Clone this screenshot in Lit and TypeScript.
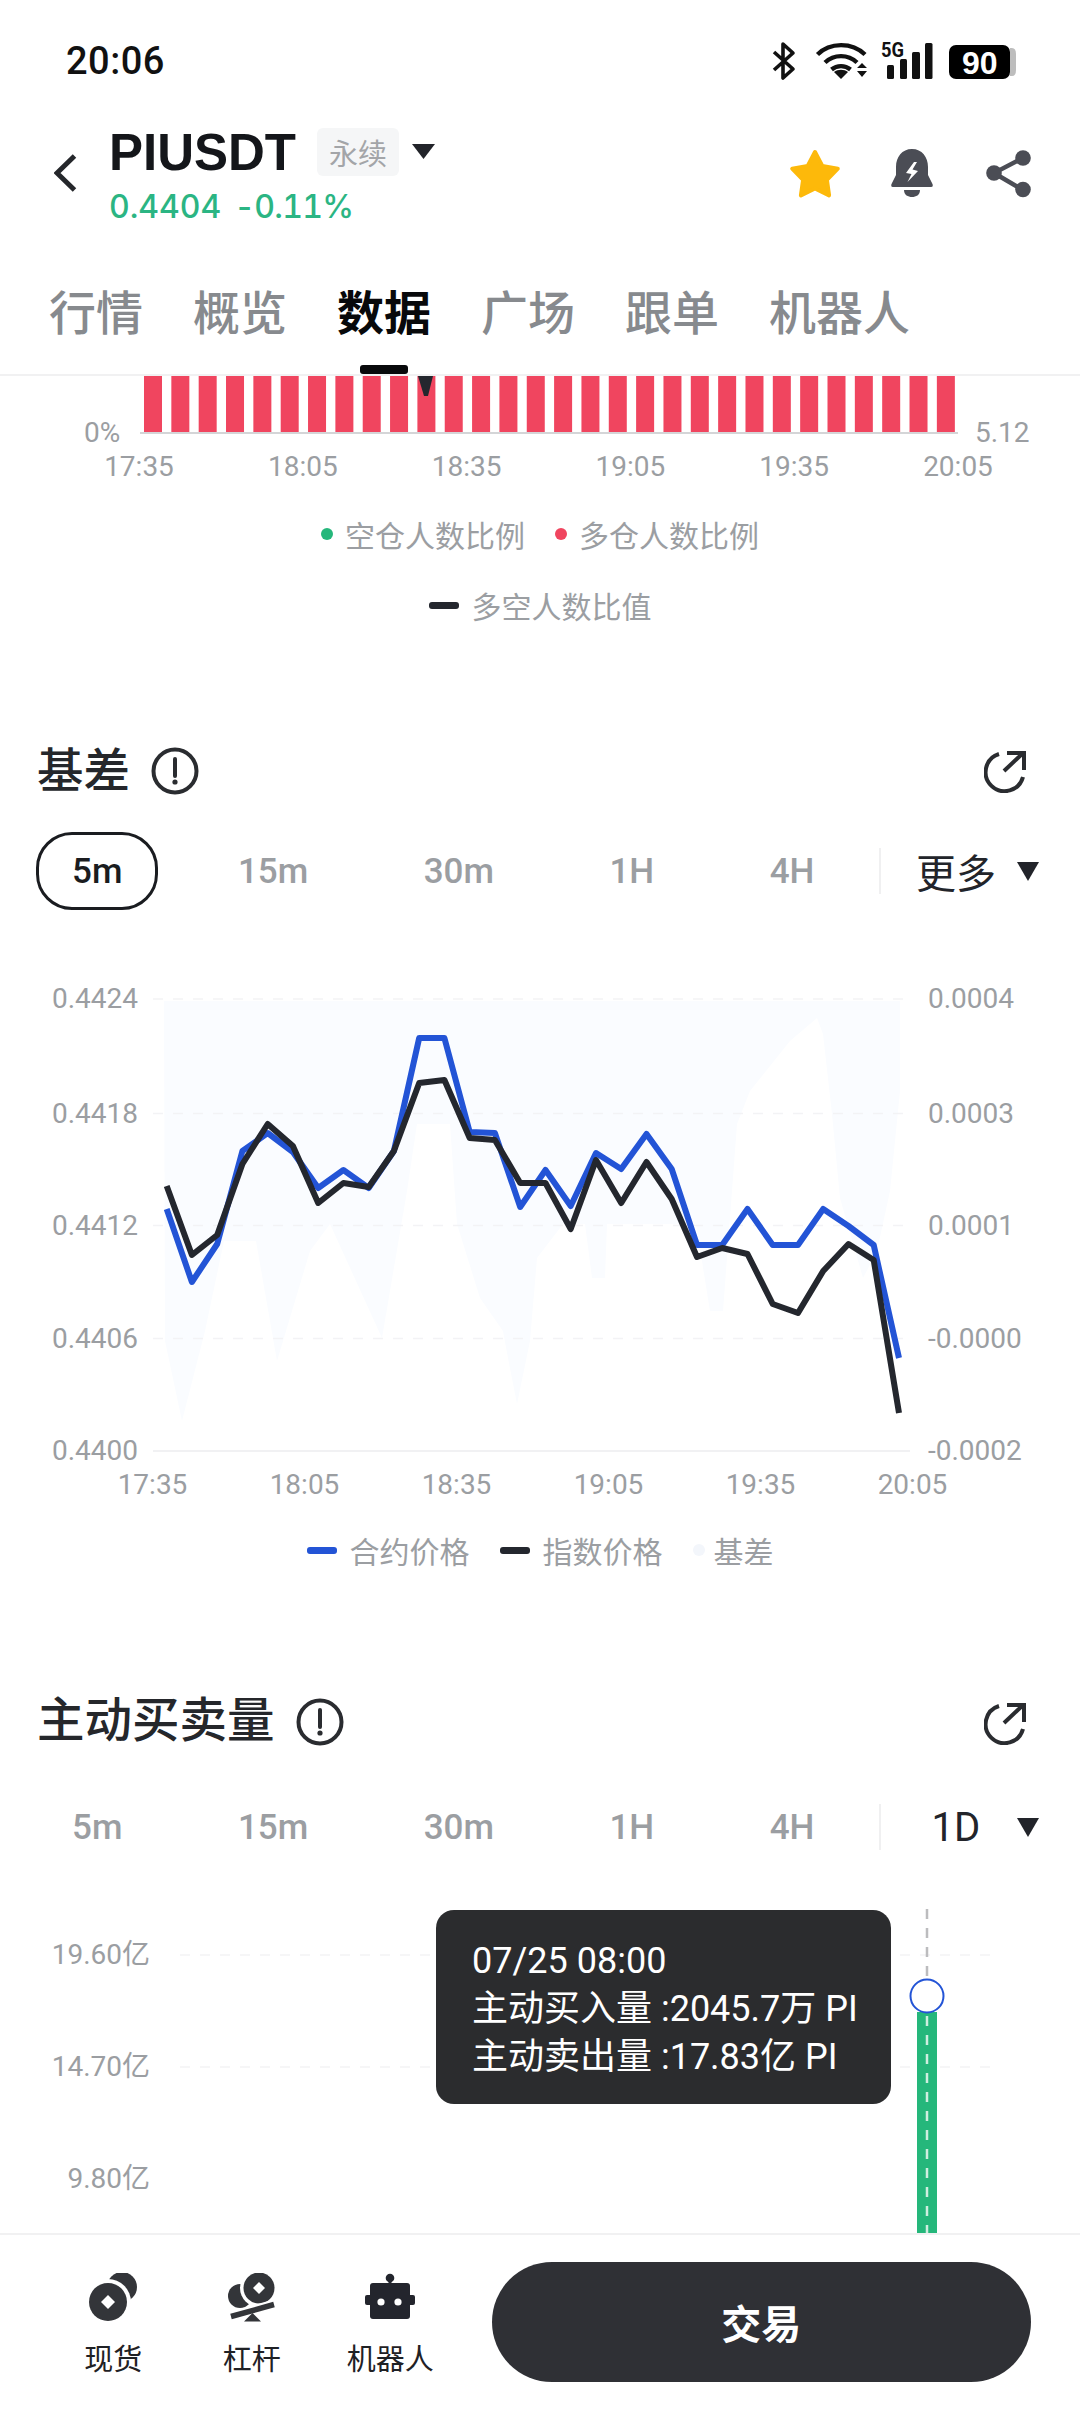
import { LitElement, html, css, svg } from 'lit';
import { customElement } from 'lit/decorators.js';

const X0 = 166.7;
const STEP = 25.25;

// contract price and index price, y in chart coordinates (page y - 960)
const BLUE = [1208, 1281, 1243, 1150, 1132, 1151, 1187, 1169, 1187, 1150, 1037, 1037, 1131, 1132, 1206, 1169,
  1205, 1152, 1168, 1133, 1168, 1244, 1244, 1208, 1244, 1244, 1208, 1225, 1244, 1357];
const BLACK = [1185, 1254, 1234, 1163, 1123, 1145, 1202, 1182, 1186, 1150, 1082, 1079, 1137, 1139, 1182, 1182,
  1228, 1159, 1202, 1161, 1198, 1256, 1247, 1253, 1303, 1312, 1270, 1243, 1259, 1412];

const BASE_AREA = [[164, 1000], [165, 1340], [182, 1420], [205, 1330], [224, 1240], [256, 1240], [277, 1360], [310, 1250],
  [330, 1223], [382, 1337], [407, 1190], [417, 1123], [450, 1123], [457, 1223], [480, 1297], [503, 1330], [508, 1357],
  [517, 1403], [530, 1340], [537, 1257], [563, 1223], [585, 1223], [592, 1277], [605, 1277], [607, 1223], [696, 1223],
  [710, 1310], [723, 1310], [737, 1123], [750, 1090], [790, 1040], [817, 1017], [823, 1033], [832, 1113], [840, 1197],
  [863, 1277], [877, 1250], [890, 1190], [900, 1090], [900, 1000]];

const toPoints = (ys: number[]) =>
  ys.map((y, i) => `${(X0 + i * STEP).toFixed(1)},${y - 960}`).join(' ');

const PERIODS = ['5m', '15m', '30m', '1H', '4H'];
const TABS = ['行情', '概览', '数据', '广场', '跟单', '机器人'];

@customElement('app-root')
export class AppRoot extends LitElement {
  static styles = css`
    :host {
      display: block;
      width: 1080px;
      height: 2412px;
      background: #fff;
      font-family: Roboto, "Noto Sans CJK SC", sans-serif;
      overflow: hidden;
    }
    .page { display: flex; flex-direction: column; height: 2412px; }
    svg { display: block; flex: none; }

    .status {
      height: 100px;
      display: flex;
      align-items: center;
      justify-content: space-between;
      padding: 22px 62px 0 66px;
      box-sizing: border-box;
    }
    .time { font-size: 38px; font-weight: 500; color: #111; letter-spacing: 0.5px; }
    .status text.five { font: 700 20px Roboto, sans-serif; fill: #111; }
    .status text.batt { font: 700 32px "Liberation Sans", sans-serif; fill: #fff; }

    .head {
      height: 170px;
      box-sizing: border-box;
      padding: 28px 49px 0 54px;
      display: flex;
      align-items: flex-start;
    }
    .back { margin: 26px 32px 0 0; }
    .symbol { display: flex; flex-direction: column; }
    .symbol-row { display: flex; align-items: center; height: 48px; }
    .name { font: 700 51px "Liberation Sans", sans-serif; color: #14161a; width: 208px; }
    .badge {
      width: 82px;
      height: 48px;
      background: #f5f6f7;
      border-radius: 6px;
      color: #a3a5a8;
      font-size: 29px;
      display: flex;
      align-items: center;
      justify-content: center;
    }
    .caret { margin-left: 13px; margin-top: -1px; }
    .price {
      margin-top: 13px;
      font-family: Inter, Roboto, sans-serif;
      font-size: 32px;
      font-weight: 500;
      font-variant-numeric: tabular-nums;
      line-height: 36px;
      color: #2bb583;
      display: flex;
      gap: 13px;
    }
    .change { letter-spacing: -0.7px; }
    .actions { margin-left: auto; display: flex; gap: 50px; margin-top: 19px; }

    .tabs {
      height: 106px;
      box-sizing: border-box;
      border-bottom: 2px solid #f1f1f2;
      padding-left: 49px;
      display: flex;
      gap: 50px;
      font-size: 47px;
      font-weight: 500;
      color: #878a8e;
    }
    .tab { position: relative; height: 104px; line-height: 88px; }
    .tab.on { color: #08090b; font-weight: 700; }
    .tab.on::after {
      content: "";
      position: absolute;
      left: 23px;
      right: 23px;
      bottom: 0;
      height: 9px;
      border-radius: 3px;
      background: #08090b;
    }

    .scroll { flex: 1; min-height: 0; overflow: hidden; display: flex; flex-direction: column; }
    .ax { font: 400 28px Roboto, "Noto Sans CJK SC", sans-serif; fill: #9b9ea2; }

    .legend {
      display: flex;
      justify-content: center;
      align-items: center;
      height: 44px;
      font-size: 30px;
      color: #9b9ea2;
    }
    .legend-top { margin-top: 26px; }
    .legend-second { margin-top: 27px; }
    .item { display: flex; align-items: center; }
    .item + .item { margin-left: 30px; }
    .dot { width: 12px; height: 12px; border-radius: 50%; margin-right: 12px; }
    .dash { width: 30px; height: 7px; border-radius: 3px; margin-right: 13px; }
    .green { background: #25b77b; }
    .red { background: #f0455f; }
    .ink { background: #24272e; }
    .blue { background: #2354d6; }
    .faint { background: #f3f6fb; margin-right: 9px; }

    .section-head {
      height: 60px;
      display: flex;
      align-items: center;
      padding: 0 54px 0 37px;
      gap: 21px;
      font-size: 46.5px;
      font-weight: 500;
      color: #25272b;
    }
    .section-head .ext { margin-left: auto; margin-top: 3px; }
    .head-basis { margin-top: 113.5px; }
    .head-basis .section-title { margin-top: -8px; }
    .head-taker { margin-top: 120px; font-size: 47.5px; }
    .head-taker .section-title { margin-top: -11px; }

    .periods {
      height: 78px;
      display: flex;
      align-items: center;
      padding-left: 36px;
      gap: 43.5px;
      font-size: 35px;
      font-weight: 500;
      color: #9b9ea2;
    }
    .periods-basis { margin-top: 31.5px; }
    .periods-taker { margin-top: 36px; }
    .period {
      height: 78px;
      box-sizing: border-box;
      padding: 0 33px;
      border: 3px solid transparent;
      border-radius: 36px;
      display: flex;
      align-items: center;
    }
    .period.on { border-color: #1a1c20; color: #1a1c20; }
    .more { display: flex; align-items: center; margin-left: -15px; height: 46px; padding-left: 14px; border-left: 2px solid #f0f0f1; }
    .more-label { width: 122px; text-align: center; color: #22242a; font-size: 40px; font-weight: 400; }

    .chart-basis { margin-top: 51px; }
    .legend-basis { margin-top: 17px; }

    .chart-taker { position: relative; flex: 1; min-height: 0; overflow: hidden; }
    .tip {
      position: absolute;
      left: 436px;
      top: 44px;
      width: 455px;
      height: 194px;
      box-sizing: border-box;
      padding: 27px 0 0 36px;
      border-radius: 18px;
      background: #2b2c2e;
      color: #fff;
      font-size: 36px;
      line-height: 48px;
    }

    .nav {
      height: 179px;
      box-sizing: border-box;
      border-top: 2px solid #f1f1f2;
      display: flex;
      padding: 0 49px 0 44px;
      background: #fff;
    }
    .nav-item {
      width: 138.5px;
      display: flex;
      flex-direction: column;
      align-items: center;
      padding-top: 38px;
      font-size: 29px;
      color: #1f2125;
    }
    .nav-item span { margin-top: 13px; }
    .trade {
      margin: 27px 0 0 32px;
      flex: 1;
      height: 120px;
      border-radius: 60px;
      background: #2f3035;
      color: #fff;
      font-size: 40px;
      font-weight: 700;
      display: flex;
      align-items: center;
      justify-content: center;
    }
  `;

  private info() {
    return html`<svg width="48" height="48" viewBox="0 0 48 48" aria-hidden="true">
      <circle cx="24" cy="24" r="21.5" fill="none" stroke="#2a2c30" stroke-width="4" />
      <path d="M24 12v17" stroke="#2a2c30" stroke-width="4" stroke-linecap="round" />
      <circle cx="24" cy="35" r="2.6" fill="#2a2c30" />
    </svg>`;
  }

  private ext() {
    return html`<svg class="ext" width="42" height="42" viewBox="985 752 42 42" fill="none" stroke="#2a2c30" stroke-width="4">
      <path d="M1000 755A19 19 0 1 0 1024 778" />
      <path d="M1005 772L1023 755M1008 754H1025V771" />
    </svg>`;
  }

  private triangle(w = 22, h = 19) {
    return html`<svg width=${w} height=${h} viewBox="0 0 22 19" preserveAspectRatio="none"><path d="M0 0H22L11 19Z" fill="#22242a" /></svg>`;
  }

  private periods(active: string) {
    return PERIODS.map(p => html`<div class="period ${p === active ? 'on' : ''}">${p}</div>`);
  }

  private statusIcons() {
    return html`<svg width="248" height="44" viewBox="772 40 248 44">
      <path d="M776 53L795 70L785 79V45L795 54L776 71" fill="none" stroke="#111" stroke-width="3.6" stroke-linejoin="round" />
      <g fill="none" stroke="#111" stroke-width="4.4">
        <path d="M819.5 55.5C832 43 854 43 867 55.5" />
        <path d="M827 63.5C836 55 850 55 859 63.5" />
        <path d="M833.5 70.5C839 66 847 66 852.5 70.5" />
      </g>
      <path d="M836 73C840 70 846 70 850 73L843 80Z" fill="#111" />
      <path d="M864 64L869 69H859ZM859 72H869L864 78Z" fill="#111" />
      <text class="five" x="883" y="58" textLength="23" lengthAdjust="spacingAndGlyphs">5G</text>
      <rect x="889" y="66" width="7" height="14" rx="1.5" fill="#111" />
      <rect x="902" y="60" width="7" height="20" rx="1.5" fill="#111" />
      <rect x="914" y="53" width="8" height="27" rx="1.5" fill="#111" />
      <rect x="927" y="44" width="7.5" height="36" rx="1.5" fill="#111" />
      <path d="M1012 49H1014Q1018 49 1018 55V71Q1018 77 1014 77H1012Z" fill="#bdbdbd" />
      <rect x="951" y="46" width="61" height="34" rx="7" fill="#000" />
      <text class="batt" x="964" y="75">90</text>
    </svg>`;
  }

  private topChart() {
    const labels = ['17:35', '18:05', '18:35', '19:05', '19:35', '20:05'];
    return html`<svg width="1080" height="110" viewBox="0 376 1080 110">
      ${Array.from({ length: 30 }, (_, i) =>
        svg`<rect x=${144 + i * 27.34} y="376" width="18" height="57" fill="#f0455f" />`)}
      <rect x="140" y="432" width="818" height="2" fill="#d4d5d7" />
      <path d="M418 376H433L428 396H424Z" fill="#24272e" />
      <text class="ax" x="84" y="442">0%</text>
      <text class="ax" x="975" y="442">5.12</text>
      ${labels.map((l, i) =>
        svg`<text class="ax" x=${139 + i * 163.8} y="476" text-anchor="middle">${l}</text>`)}
    </svg>`;
  }

  private basisChart() {
    const left = ['0.4424', '0.4418', '0.4412', '0.4406', '0.4400'];
    const right = ['0.0004', '0.0003', '0.0001', '-0.0000', '-0.0002'];
    const grid = [38, 152.5, 264.5, 377.5];
    const times = ['17:35', '18:05', '18:35', '19:05', '19:35', '20:05'];
    const area = BASE_AREA.map(([x, y]) => `${x},${y - 960}`).join(' ');
    return html`<svg class="chart-basis" width="1080" height="550" viewBox="0 0 1080 550">
      <polygon points=${area} fill="#fafcff" />
      ${grid.map(y =>
        svg`<line x1="153" x2="910" y1=${y} y2=${y} stroke="#f3f3f5" stroke-width="1.5" stroke-dasharray="10 10" />`)}
      <line x1="153" x2="910" y1="490" y2="490" stroke="#f1f1f3" stroke-width="2" />
      ${[...grid, 490].map((y, i) => svg`
        <text class="ax" x="52" y=${y + 9}>${left[i]}</text>
        <text class="ax" x="928" y=${y + 9}>${right[i]}</text>`)}
      <polyline points=${toPoints(BLUE)} fill="none" stroke="#2354d6" stroke-width="6" stroke-linejoin="round" />
      <polyline points=${toPoints(BLACK)} fill="none" stroke="#24272e" stroke-width="6" stroke-linejoin="round" />
      ${times.map((t, i) =>
        svg`<text class="ax" x=${152.5 + i * 152} y="533" text-anchor="middle">${t}</text>`)}
    </svg>`;
  }

  private takerChart() {
    const rows = [['19.60亿', 89], ['14.70亿', 201], ['9.80亿', 313]] as const;
    return html`<div class="chart-taker">
      <svg width="1080" height="367" viewBox="0 0 1080 367">
        ${rows.slice(0, 2).map(([, y]) =>
          svg`<line x1="180" x2="992" y1=${y} y2=${y} stroke="#f3f3f5" stroke-width="1.5" stroke-dasharray="10 10" />`)}
        ${rows.map(([l, y]) =>
          svg`<text class="ax" x="150" y=${y + 9} text-anchor="end">${l}</text>`)}
        <rect x="917" y="146" width="20" height="221" fill="#25b77b" />
        <line x1="927" x2="927" y1="43" y2="120" stroke="#bcbcbe" stroke-width="2.5" stroke-dasharray="10 9" />
        <line x1="927" x2="927" y1="150" y2="367" stroke="#cfeee0" stroke-width="2.5" stroke-dasharray="10 9" />
        <circle cx="927" cy="130" r="16.5" fill="#fff" stroke="#2354d6" stroke-width="2" />
      </svg>
      <div class="tip">
        <div>07/25 08:00</div>
        <div>主动买入量 :2045.7万 PI</div>
        <div>主动卖出量 :17.83亿 PI</div>
      </div>
    </div>`;
  }

  private navIcons() {
    const coin = html`<svg width="50" height="50" viewBox="89 2275 50 50">
      <circle cx="123" cy="2289" r="15" fill="#333539" />
      <circle cx="109" cy="2304" r="23" fill="#fff" />
      <circle cx="109" cy="2304" r="19" fill="#333539" />
      <path d="M109 2297L116 2304L109 2311L102 2304Z" fill="#fff" />
    </svg>`;
    const lever = html`<svg width="50" height="50" viewBox="228 2275 50 50">
      <circle cx="241" cy="2298" r="12" fill="#333539" />
      <circle cx="260" cy="2290" r="19" fill="#fff" />
      <circle cx="260" cy="2290" r="15.5" fill="#333539" />
      <path d="M260 2284L266 2290L260 2296L254 2290Z" fill="#fff" />
      <path d="M232 2318.5L275 2306.5" stroke="#fff" stroke-width="10" />
      <path d="M232 2318.5L275 2306.5" stroke="#333539" stroke-width="5.5" />
      <path d="M253.5 2315L262 2323.5H245Z" fill="#333539" />
    </svg>`;
    const robot = html`<svg width="50" height="50" viewBox="365 2272 50 50">
      <circle cx="390" cy="2277" r="4.3" fill="#23252d" />
      <rect x="388.5" y="2278" width="3" height="6" fill="#23252d" />
      <rect x="370" y="2282" width="40" height="36" rx="3" fill="#23252d" />
      <rect x="365" y="2294" width="50" height="10" rx="2" fill="#23252d" />
      <circle cx="381" cy="2301" r="3.6" fill="#fff" />
      <circle cx="398" cy="2301" r="3.6" fill="#fff" />
    </svg>`;
    return [[coin, '现货'], [lever, '杠杆'], [robot, '机器人']].map(
      ([icon, label]) => html`<div class="nav-item">${icon}<span>${label}</span></div>`);
  }

  render() {
    return html`<div class="page">
      <div class="status">
        <div class="time">20:06</div>
        ${this.statusIcons()}
      </div>

      <div class="head">
        <svg class="back" width="23" height="38" viewBox="0 0 23 38" fill="none" stroke="#25272b" stroke-width="5">
          <path d="M20.5 2L3 19L20.5 36" />
        </svg>
        <div class="symbol">
          <div class="symbol-row">
            <div class="name">PIUSDT</div>
            <div class="badge">永续</div>
            <div class="caret">${this.triangle(23, 15)}</div>
          </div>
          <div class="price"><span>0.4404</span><span class="change">-0.11%</span></div>
        </div>
        <div class="actions">
          <svg width="54" height="52" viewBox="788 146 54 52">
            <path d="M816 151L823.3 164.9L838.8 167.6L827.9 178.9L830.1 194.4L816 187.5L801.9 194.4L804.1 178.9L793.2 167.6L808.7 164.9Z"
              fill="#fdb90a" stroke="#fdb90a" stroke-width="4" stroke-linejoin="round" />
          </svg>
          <svg width="42" height="52" viewBox="891 146 42 52">
            <path d="M912 148C902 148 896 156 896 166V174L891.5 183Q890.5 186 893 186H931Q933.5 186 932.5 183L928 174V166C928 156 922 148 912 148Z" fill="#4b4d55" />
            <path d="M904 189H920C920 194 916 196 912 196C908 196 904 194 904 189Z" fill="#4b4d55" />
            <path d="M914 161L906 172L911.5 173L907.5 181L918 170L912.5 168.5L917 161Z" fill="#fff" />
          </svg>
          <svg width="48" height="52" viewBox="983 146 48 52">
            <path d="M1023 157L994 172L1023 189" fill="none" stroke="#4b4d55" stroke-width="4.5" />
            <circle cx="1023" cy="157" r="7.8" fill="#4b4d55" />
            <circle cx="994" cy="172" r="7.8" fill="#4b4d55" />
            <circle cx="1023" cy="188.5" r="7.8" fill="#4b4d55" />
          </svg>
        </div>
      </div>

      <div class="tabs">
        ${TABS.map(t => html`<div class="tab ${t === '数据' ? 'on' : ''}">${t}</div>`)}
      </div>

      <div class="scroll">
        ${this.topChart()}
        <div class="legend legend-top">
          <div class="item"><i class="dot green"></i>空仓人数比例</div>
          <div class="item"><i class="dot red"></i>多仓人数比例</div>
        </div>
        <div class="legend legend-second">
          <div class="item"><i class="dash ink"></i>多空人数比值</div>
        </div>

        <div class="section-head head-basis"><span class="section-title">基差</span>${this.info()}${this.ext()}</div>
        <div class="periods periods-basis">
          ${this.periods('5m')}
          <div class="more"><span class="more-label">更多</span>${this.triangle()}</div>
        </div>
        ${this.basisChart()}
        <div class="legend legend-basis">
          <div class="item"><i class="dash blue"></i>合约价格</div>
          <div class="item"><i class="dash ink"></i>指数价格</div>
          <div class="item"><i class="dot faint"></i>基差</div>
        </div>

        <div class="section-head head-taker"><span class="section-title">主动买卖量</span>${this.info()}${this.ext()}</div>
        <div class="periods periods-taker">
          ${this.periods('')}
          <div class="more"><span class="more-label">1D</span>${this.triangle()}</div>
        </div>
        ${this.takerChart()}
      </div>

      <div class="nav">
        ${this.navIcons()}
        <div class="trade">交易</div>
      </div>
    </div>`;
  }
}
